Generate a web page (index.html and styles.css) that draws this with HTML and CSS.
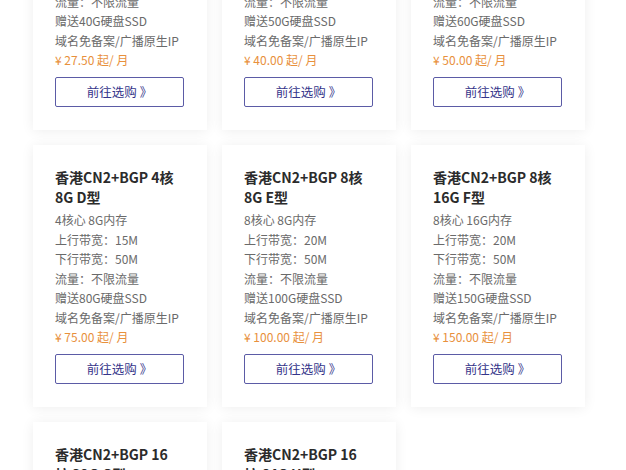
FILE: index.html
```html
<!DOCTYPE html>
<html lang="zh-CN">
<head>
<meta charset="utf-8">
<link rel="stylesheet" href="styles.css">
</head>
<body>
<div class="grid">
  <div class="card">
    <h3 class="title">香港CN2+BGP 2核<br>2G A型</h3>
    <ul class="specs">
      <li>2核心 2G内存</li>
      <li>上行带宽：10M</li>
      <li>下行带宽：50M</li>
      <li>流量：不限流量</li>
      <li>赠送40G硬盘SSD</li>
      <li>域名免备案/广播原生IP</li>
      <li class="price">¥ 27.50 起/ 月</li>
    </ul>
    <a class="btn">前往选购 》</a>
  </div>
  <div class="card">
    <h3 class="title">香港CN2+BGP 2核<br>4G B型</h3>
    <ul class="specs">
      <li>2核心 4G内存</li>
      <li>上行带宽：10M</li>
      <li>下行带宽：50M</li>
      <li>流量：不限流量</li>
      <li>赠送50G硬盘SSD</li>
      <li>域名免备案/广播原生IP</li>
      <li class="price">¥ 40.00 起/ 月</li>
    </ul>
    <a class="btn">前往选购 》</a>
  </div>
  <div class="card">
    <h3 class="title">香港CN2+BGP 4核<br>4G C型</h3>
    <ul class="specs">
      <li>4核心 4G内存</li>
      <li>上行带宽：15M</li>
      <li>下行带宽：50M</li>
      <li>流量：不限流量</li>
      <li>赠送60G硬盘SSD</li>
      <li>域名免备案/广播原生IP</li>
      <li class="price">¥ 50.00 起/ 月</li>
    </ul>
    <a class="btn">前往选购 》</a>
  </div>
  <div class="card">
    <h3 class="title">香港CN2+BGP 4核<br>8G D型</h3>
    <ul class="specs">
      <li>4核心 8G内存</li>
      <li>上行带宽：15M</li>
      <li>下行带宽：50M</li>
      <li>流量：不限流量</li>
      <li>赠送80G硬盘SSD</li>
      <li>域名免备案/广播原生IP</li>
      <li class="price">¥ 75.00 起/ 月</li>
    </ul>
    <a class="btn">前往选购 》</a>
  </div>
  <div class="card">
    <h3 class="title">香港CN2+BGP 8核<br>8G E型</h3>
    <ul class="specs">
      <li>8核心 8G内存</li>
      <li>上行带宽：20M</li>
      <li>下行带宽：50M</li>
      <li>流量：不限流量</li>
      <li>赠送100G硬盘SSD</li>
      <li>域名免备案/广播原生IP</li>
      <li class="price">¥ 100.00 起/ 月</li>
    </ul>
    <a class="btn">前往选购 》</a>
  </div>
  <div class="card">
    <h3 class="title">香港CN2+BGP 8核<br>16G F型</h3>
    <ul class="specs">
      <li>8核心 16G内存</li>
      <li>上行带宽：20M</li>
      <li>下行带宽：50M</li>
      <li>流量：不限流量</li>
      <li>赠送150G硬盘SSD</li>
      <li>域名免备案/广播原生IP</li>
      <li class="price">¥ 150.00 起/ 月</li>
    </ul>
    <a class="btn">前往选购 》</a>
  </div>
  <div class="card">
    <h3 class="title">香港CN2+BGP 16<br>核 32G G型</h3>
    <ul class="specs">
      <li>16核心 32G内存</li>
      <li>上行带宽：30M</li>
      <li>下行带宽：50M</li>
      <li>流量：不限流量</li>
      <li>赠送200G硬盘SSD</li>
      <li>域名免备案/广播原生IP</li>
      <li class="price">¥ 200.00 起/ 月</li>
    </ul>
    <a class="btn">前往选购 》</a>
  </div>
  <div class="card">
    <h3 class="title">香港CN2+BGP 16<br>核 64G H型</h3>
    <ul class="specs">
      <li>16核心 64G内存</li>
      <li>上行带宽：30M</li>
      <li>下行带宽：50M</li>
      <li>流量：不限流量</li>
      <li>赠送300G硬盘SSD</li>
      <li>域名免备案/广播原生IP</li>
      <li class="price">¥ 300.00 起/ 月</li>
    </ul>
    <a class="btn">前往选购 》</a>
  </div>
</div>
</body>
</html>
```
FILE: styles.css
```css
* { box-sizing: border-box; }
html, body { margin: 0; padding: 0; background: #ffffff; overflow: hidden; }
body {
  font-family: "Noto Sans CJK SC", "Noto Sans", sans-serif;
  height: 470px;
}
.grid {
  display: grid;
  grid-template-columns: repeat(3, 174px);
  column-gap: 15px;
  row-gap: 15px;
  padding-left: 33px;
  margin-top: -132px;
}
.card {
  background: #fff;
  height: 262px;
  padding: 22px 22px 23px;
  box-shadow: 0 1px 12px rgba(0, 0, 0, 0.07);
}
.title {
  margin: 0 0 3px;
  font-size: 14px;
  line-height: 20px;
  font-weight: 700;
  color: #2b2b2b;
  white-space: nowrap;
}
.specs {
  list-style: none;
  margin: 0;
  padding: 0;
  font-size: 12px;
  line-height: 19.5px;
  color: #6a6a6a;
  white-space: nowrap;
}
.specs .price { color: #e8903c; }
.btn {
  display: flex;
  align-items: center;
  justify-content: center;
  margin-top: 7px;
  width: 129px;
  height: 30px;
  border: 1px solid #5b5ba6;
  border-radius: 2px;
  color: #35358a;
  font-size: 12.5px;
  text-decoration: none;
}
```
